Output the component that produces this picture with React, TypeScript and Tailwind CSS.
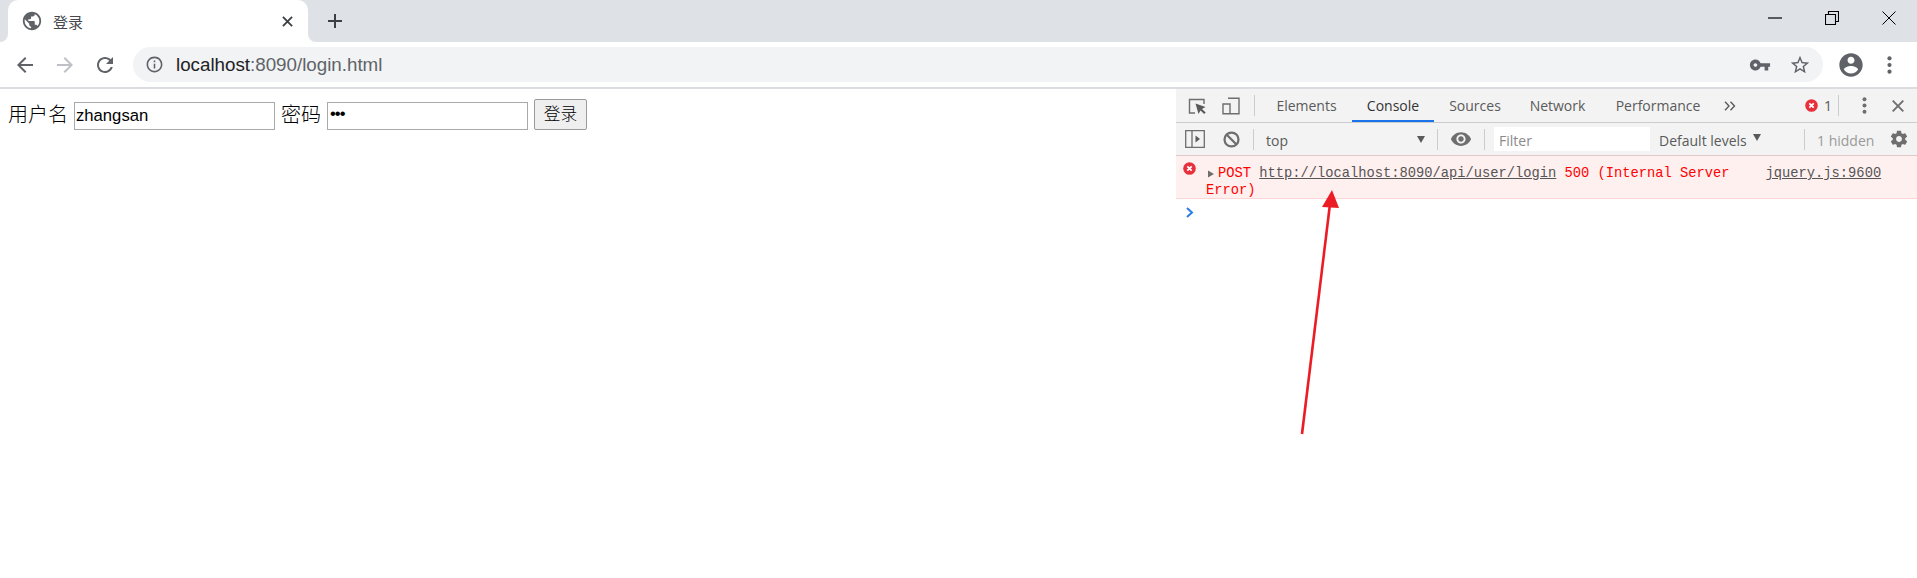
import React from "react";

const P = {
  back: "M20 11H7.83l5.59-5.59L12 4l-8 8 8 8 1.41-1.41L7.83 13H20v-2z",
  fwd: "M12 4l-1.41 1.41L16.17 11H4v2h12.17l-5.58 5.59L12 20l8-8z",
  refresh: "M17.65 6.35C16.2 4.9 14.21 4 12 4c-4.42 0-7.99 3.58-7.99 8s3.57 8 7.99 8c3.73 0 6.84-2.55 7.73-6h-2.08c-.82 2.33-3.04 4-5.65 4-3.31 0-6-2.69-6-6s2.69-6 6-6c1.66 0 3.14.69 4.22 1.78L13 11h7V4l-2.35 2.35z",
  info: "M11 7h2v2h-2zm0 4h2v6h-2zm1-9C6.48 2 2 6.48 2 12s4.48 10 10 10 10-4.48 10-10S17.52 2 12 2zm0 18c-4.41 0-8-3.59-8-8s3.59-8 8-8 8 3.59 8 8-3.59 8-8 8z",
  key: "M12.65 10C11.83 7.67 9.61 6 7 6c-3.31 0-6 2.69-6 6s2.69 6 6 6c2.61 0 4.83-1.67 5.65-4H17v4h4v-4h2v-4H12.65zM7 14c-1.1 0-2-.9-2-2s.9-2 2-2 2 .9 2 2-.9 2-2 2z",
  star: "M22 9.24l-7.19-.62L12 2 9.19 8.63 2 9.24l5.46 4.73L5.82 21 12 17.27 18.18 21l-1.63-7.03L22 9.24zM12 15.4l-3.76 2.27 1-4.28-3.32-2.88 4.38-.38L12 6.1l1.71 4.04 4.38.38-3.32 2.88 1 4.28L12 15.4z",
  account: "M12 2C6.48 2 2 6.48 2 12s4.48 10 10 10 10-4.48 10-10S17.52 2 12 2zm0 3c1.66 0 3 1.34 3 3s-1.34 3-3 3-3-1.34-3-3 1.34-3 3-3zm0 14.2c-2.5 0-4.71-1.28-6-3.22.03-1.99 4-3.08 6-3.08 1.99 0 5.97 1.09 6 3.08-1.29 1.94-3.5 3.22-6 3.22z",
  globe: "M12 2C6.48 2 2 6.48 2 12s4.48 10 10 10 10-4.48 10-10S17.52 2 12 2zm-1 17.93c-3.95-.49-7-3.85-7-7.93 0-.62.08-1.21.21-1.79L9 15v1c0 1.1.9 2 2 2v1.93zm6.9-2.54c-.26-.81-1-1.39-1.9-1.39h-1v-3c0-.55-.45-1-1-1H8v-2h2c.55 0 1-.45 1-1V7h2c1.1 0 2-.9 2-2v-.41c2.93 1.19 5 4.06 5 7.41 0 2.08-.8 3.97-2.1 5.39z",
  gear: "M19.43 12.98c.04-.32.07-.64.07-.98s-.03-.66-.07-.98l2.11-1.65c.19-.15.24-.42.12-.64l-2-3.46c-.12-.22-.39-.3-.61-.22l-2.49 1c-.52-.4-1.08-.73-1.69-.98l-.38-2.65C14.46 2.18 14.25 2 14 2h-4c-.25 0-.46.18-.49.42l-.38 2.65c-.61.25-1.17.59-1.69.98l-2.49-1c-.23-.09-.49 0-.61.22l-2 3.46c-.13.22-.07.49.12.64l2.11 1.65c-.04.32-.07.65-.07.98s.03.66.07.98l-2.11 1.65c-.19.15-.24.42-.12.64l2 3.46c.12.22.39.3.61.22l2.49-1c.52.4 1.08.73 1.69.98l.38 2.65c.03.24.24.42.49.42h4c.25 0 .46-.18.49-.42l.38-2.65c.61-.25 1.17-.59 1.69-.98l2.49 1c.23.09.49 0 .61-.22l2-3.46c.12-.22.07-.49-.12-.64l-2.11-1.65zM12 15.5c-1.93 0-3.5-1.57-3.5-3.5s1.57-3.5 3.5-3.5 3.5 1.57 3.5 3.5-1.57 3.5-3.5 3.5z",
  eye: "M12 4.5C7 4.5 2.73 7.61 1 12c1.73 4.39 6 7.5 11 7.5s9.27-3.11 11-7.5c-1.73-4.39-6-7.5-11-7.5zM12 17c-2.76 0-5-2.24-5-5s2.24-5 5-5 5 2.24 5 5-2.24 5-5 5zm0-8c-1.66 0-3 1.34-3 3s1.34 3 3 3 3-1.34 3-3-1.34-3-3-3z",
};

function I({ d, className }: { d: string; className: string }) {
  return (
    <svg viewBox="0 0 24 24" className={"shrink-0 fill-current " + className}>
      <path d={d} />
    </svg>
  );
}

function Dots({ className }: { className: string }) {
  return (
    <svg viewBox="0 0 5 19" className={"shrink-0 fill-current " + className}>
      <circle cx="2.5" cy="2.5" r="2.2" />
      <circle cx="2.5" cy="9.5" r="2.2" />
      <circle cx="2.5" cy="16.5" r="2.2" />
    </svg>
  );
}

function ErrDot({ className }: { className: string }) {
  return (
    <svg viewBox="0 0 13 13" className={"shrink-0 " + className}>
      <circle cx="6.5" cy="6.5" r="6.3" fill="#e8303c" />
      <path d="M4.3 4.3l4.4 4.4M8.7 4.3l-4.4 4.4" stroke="#fff" strokeWidth="1.7" fill="none" />
    </svg>
  );
}

function Sep({ className }: { className: string }) {
  return <div className={"w-px h-[21px] bg-[#cccccc] shrink-0 " + className} />;
}

function Tab({ label, active, className }: { label: string; active?: boolean; className: string }) {
  return (
    <div className={"relative h-full flex items-center justify-center shrink-0 " + (active ? "text-[#333333] " : "text-[#5a5a5a] ") + className}>
      {label}
      {active && <div className="absolute left-0 right-0 bottom-0 h-[2px] bg-[#1a73e8]" />}
    </div>
  );
}

export default function App() {
  return (
    <div className="relative w-[1917px] h-[578px] overflow-hidden bg-white flex flex-col font-['Liberation_Sans','Noto_Sans_CJK_SC',sans-serif]">
      {/* tab strip */}
      <div className="h-[42px] bg-[#dee1e6] flex items-stretch shrink-0">
        <div className="relative ml-[8px] w-[300px] bg-white rounded-t-[10px] flex items-center text-[#3c4043]">
          <svg viewBox="0 0 8 8" className="absolute left-[-8px] bottom-0 w-[8px] h-[8px] fill-white"><path d="M8 0v8H0a8 8 0 0 0 8-8z" /></svg>
          <svg viewBox="0 0 8 8" className="absolute right-[-8px] bottom-0 w-[8px] h-[8px] fill-white"><path d="M0 0v8h8a8 8 0 0 1-8-8z" /></svg>
          <I d={P.globe} className="ml-[13px] w-[22px] h-[22px] text-[#5f6368]" />
          <span className="ml-[10px] w-[229px] text-[15px] leading-none font-['Noto_Sans_CJK_SC',sans-serif] text-[#45484c]">登录</span>
          <svg viewBox="0 0 12 12" className="w-[11px] h-[11px] stroke-[#3c4043] stroke-[2] fill-none mt-[1px]"><path d="M1 1l10 10M11 1L1 11" /></svg>
        </div>
        <div className="ml-[19px] flex items-center">
          <svg viewBox="0 0 16 16" className="w-[16px] h-[16px] stroke-[#3c4043] stroke-[2] fill-none"><path d="M8 1v14M1 8h14" /></svg>
        </div>
        <div className="ml-auto flex items-center pb-[6px] text-black">
          <svg viewBox="0 0 14 2" className="w-[14px] h-[2px] stroke-black stroke-[1.2] fill-none"><path d="M0 1h14" /></svg>
          <svg viewBox="0 0 14 14" className="ml-[43px] w-[14px] h-[14px] stroke-black stroke-[1.1] fill-none"><path d="M.5 3.5h10v10H.5zM3.5 3.5v-3h10v10h-3" /></svg>
          <svg viewBox="0 0 14 14" className="ml-[43px] mr-[21px] w-[14px] h-[14px] stroke-black stroke-[1] fill-none"><path d="M.5.5l13 13M13.5.5l-13 13" /></svg>
        </div>
      </div>

      {/* toolbar */}
      <div className="h-[45px] bg-white flex items-center shrink-0 text-[#5f6368]">
        <I d={P.back} className="ml-[13px] w-[24px] h-[24px]" />
        <I d={P.fwd} className="ml-[16px] w-[24px] h-[24px] text-[#bdc1c6]" />
        <I d={P.refresh} className="ml-[16px] w-[24px] h-[24px]" />
        <div className="ml-[16px] w-[1690px] h-[35px] rounded-full bg-[#f1f3f4] flex items-center">
          <I d={P.info} className="ml-[12px] w-[19px] h-[19px]" />
          <div className="ml-[12px] mt-[1px] flex-1 text-[18.75px] leading-none text-[#5f6368]">
            <span className="text-[#202124]">localhost</span>:8090/login.html
          </div>
          <I d={P.key} className="w-[22px] h-[22px]" />
          <I d={P.star} className="ml-[18px] mr-[12px] w-[22px] h-[22px]" />
        </div>
        <I d={P.account} className="ml-[14px] w-[28px] h-[28px]" />
        <Dots className="ml-[22px] w-[5px] h-[18px]" />
      </div>

      <div className="h-[2px] bg-[#dadce0] shrink-0" />

      {/* content */}
      <div className="flex-1 flex min-h-0">
        <div className="flex-1 pl-[8px] pt-[10px] text-black">
          <div className="flex items-start h-[32px]">
            <span className="text-[20px] leading-[26px] w-[60px] mt-[2px] font-['Noto_Sans_CJK_SC',sans-serif] font-light">用户名</span>
            <div className="ml-[6px] mt-[3px] w-[201px] h-[28px] border border-[#a9a9a9] text-[16.67px] leading-[25px] pl-[1px]">zhangsan</div>
            <span className="ml-[6px] text-[20px] leading-[26px] w-[40px] mt-[2px] font-['Noto_Sans_CJK_SC',sans-serif] font-light">密码</span>
            <div className="ml-[6px] mt-[3px] w-[201px] h-[28px] border border-[#a9a9a9] text-[16.67px] leading-[22px] pl-[2px] tracking-[-1px]">•••</div>
            <div className="ml-[6px] w-[53px] h-[31px] pb-[2px] bg-[#efefef] border border-[#9a9a9a] rounded-[2px] flex items-center justify-center text-[16.67px] font-['Noto_Sans_CJK_SC',sans-serif] font-light">登录</div>
          </div>
        </div>

        {/* devtools */}
        <div className="w-[741px] flex flex-col text-[14px] font-['Open_Sans','Noto_Sans',sans-serif]">
          <div className="h-[34px] bg-[#f3f3f3] border-b border-[#cccccc] flex items-center shrink-0 text-[#5a5a5a]">
            <svg viewBox="0 0 20 20" className="ml-[11px] w-[20px] h-[20px] fill-none"><path d="M8 17H2.5V3.5H17V8" stroke="#6e6e6e" strokeWidth="1.4" /><path d="M8.5 7.5l3 10.5 2-3.6 3.7 3.7 1.5-1.5-3.7-3.7 3.5-2z" fill="#5a5a5a" /></svg>
            <svg viewBox="0 0 20 20" className="ml-[14px] w-[20px] h-[20px] fill-none stroke-[#6e6e6e] stroke-[1.4]"><path d="M7 2.2h11v15.6H7M2 8h7v9.8H2z" /></svg>
            <Sep className="ml-[13px]" />
            <Tab label="Elements" className="ml-[22px] w-[59px]" />
            <Tab label="Console" active className="ml-[16px] w-[82px]" />
            <Tab label="Sources" className="ml-[15px] w-[52px]" />
            <Tab label="Network" className="ml-[28px] w-[57px]" />
            <Tab label="Performance" className="ml-[30px] w-[84px]" />
            <svg viewBox="0 0 12 10" className="ml-[24px] w-[12px] h-[10px] fill-none stroke-[#5a5a5a] stroke-[1.4]"><path d="M1 .7L5 5 1 9.3M6.5.7L10.5 5l-4 4.3" /></svg>
            <ErrDot className="ml-[69px] w-[13px] h-[13px]" />
            <span className="ml-[6px] w-[7px] text-[#5a5a5a]">1</span>
            <Sep className="ml-[7px]" />
            <Dots className="ml-[23px] w-[5px] h-[17px] text-[#6e6e6e]" />
            <svg viewBox="0 0 12 12" className="ml-[25px] w-[12px] h-[12px] stroke-[#6e6e6e] stroke-[1.9] fill-none"><path d="M.7.7l10.6 10.6M11.3.7L.7 11.3" /></svg>
          </div>

          <div className="h-[33px] bg-[#f3f3f3] border-b border-[#e0c8c8] flex items-center shrink-0 text-[#5a5a5a]">
            <svg viewBox="0 0 20 18" className="ml-[9px] w-[20px] h-[18px] fill-none"><path d="M.7.7h18.6v16.6H.7zM7 .7v16.6" stroke="#6e6e6e" strokeWidth="1.3" /><path d="M10.5 5.5L15 9l-4.5 3.5z" fill="#5a5a5a" /></svg>
            <svg viewBox="0 0 18 18" className="ml-[18px] w-[17px] h-[17px] fill-none stroke-[#6e6e6e] stroke-[2.4]"><circle cx="9" cy="9" r="7.4" /><path d="M4 4l10 10" /></svg>
            <Sep className="ml-[13px]" />
            <span className="ml-[12px] mt-[2px] w-[151px] text-[#5a5a5a]">top</span>
            <svg viewBox="0 0 8 7" className="w-[8px] h-[7px] fill-[#5a5a5a]"><path d="M0 0h8L4 7z" /></svg>
            <Sep className="ml-[12px]" />
            <I d={P.eye} className="ml-[12px] w-[22px] h-[22px] text-[#6e6e6e]" />
            <Sep className="ml-[12px]" />
            <div className="ml-[9px] w-[156px] h-[24px] bg-white text-[#8a8a8a] pl-[5px] leading-[27px]">Filter</div>
            <span className="ml-[9px] mt-[2px] w-[89px] whitespace-nowrap">Default levels</span>
            <svg viewBox="0 0 8 7" className="ml-[5px] w-[8px] h-[7px] mb-[3px] fill-[#5a5a5a]"><path d="M0 0h8L4 7z" /></svg>
            <Sep className="ml-[43px]" />
            <span className="ml-[12px] mt-[2px] w-[58px] whitespace-nowrap text-[#9a9a9a]">1 hidden</span>
            <I d={P.gear} className="ml-[14px] w-[20px] h-[20px] text-[#6e6e6e]" />
          </div>

          <div className="h-[43px] bg-[#fff0f0] border-b border-[#ffd6d6] shrink-0 flex text-[13.75px] leading-[17px] font-['Liberation_Mono',monospace] text-[#ff0000]">
            <ErrDot className="ml-[7px] mt-[6px] w-[13px] h-[13px]" />
            <div className="ml-[10px] w-[660px] pt-[9px] relative">
              <div className="flex items-center whitespace-pre">
                <svg viewBox="0 0 7 8" className="ml-[2px] w-[6px] h-[8px] fill-[#6e6e6e] shrink-0"><path d="M0 0l7 4-7 4z" /></svg>
                <span className="ml-[4px]">POST </span>
                <span className="underline text-[#555555]">http://localhost:8090/api/user/login</span>
                <span> 500 (Internal Server</span>
                <span className="ml-[36px] underline text-[#555555]">jquery.js:9600</span>
              </div>
              <div>Error)</div>
            </div>
          </div>

          <div className="pl-[10px] pt-[8px] bg-white">
            <svg viewBox="0 0 8 11" className="w-[8px] h-[11px] fill-none stroke-[#2a7de1] stroke-[2]"><path d="M1 1l5 4.5L1 10" /></svg>
          </div>
        </div>
      </div>

      {/* annotation arrow */}
      <svg viewBox="0 0 1917 578" className="absolute inset-0 w-[1917px] h-[578px] pointer-events-none">
        <path d="M1302 434L1330 204" stroke="#ec1c24" strokeWidth="2.6" fill="none" />
        <path d="M1332 190l7 18-17-1z" fill="#ec1c24" />
      </svg>
    </div>
  );
}
